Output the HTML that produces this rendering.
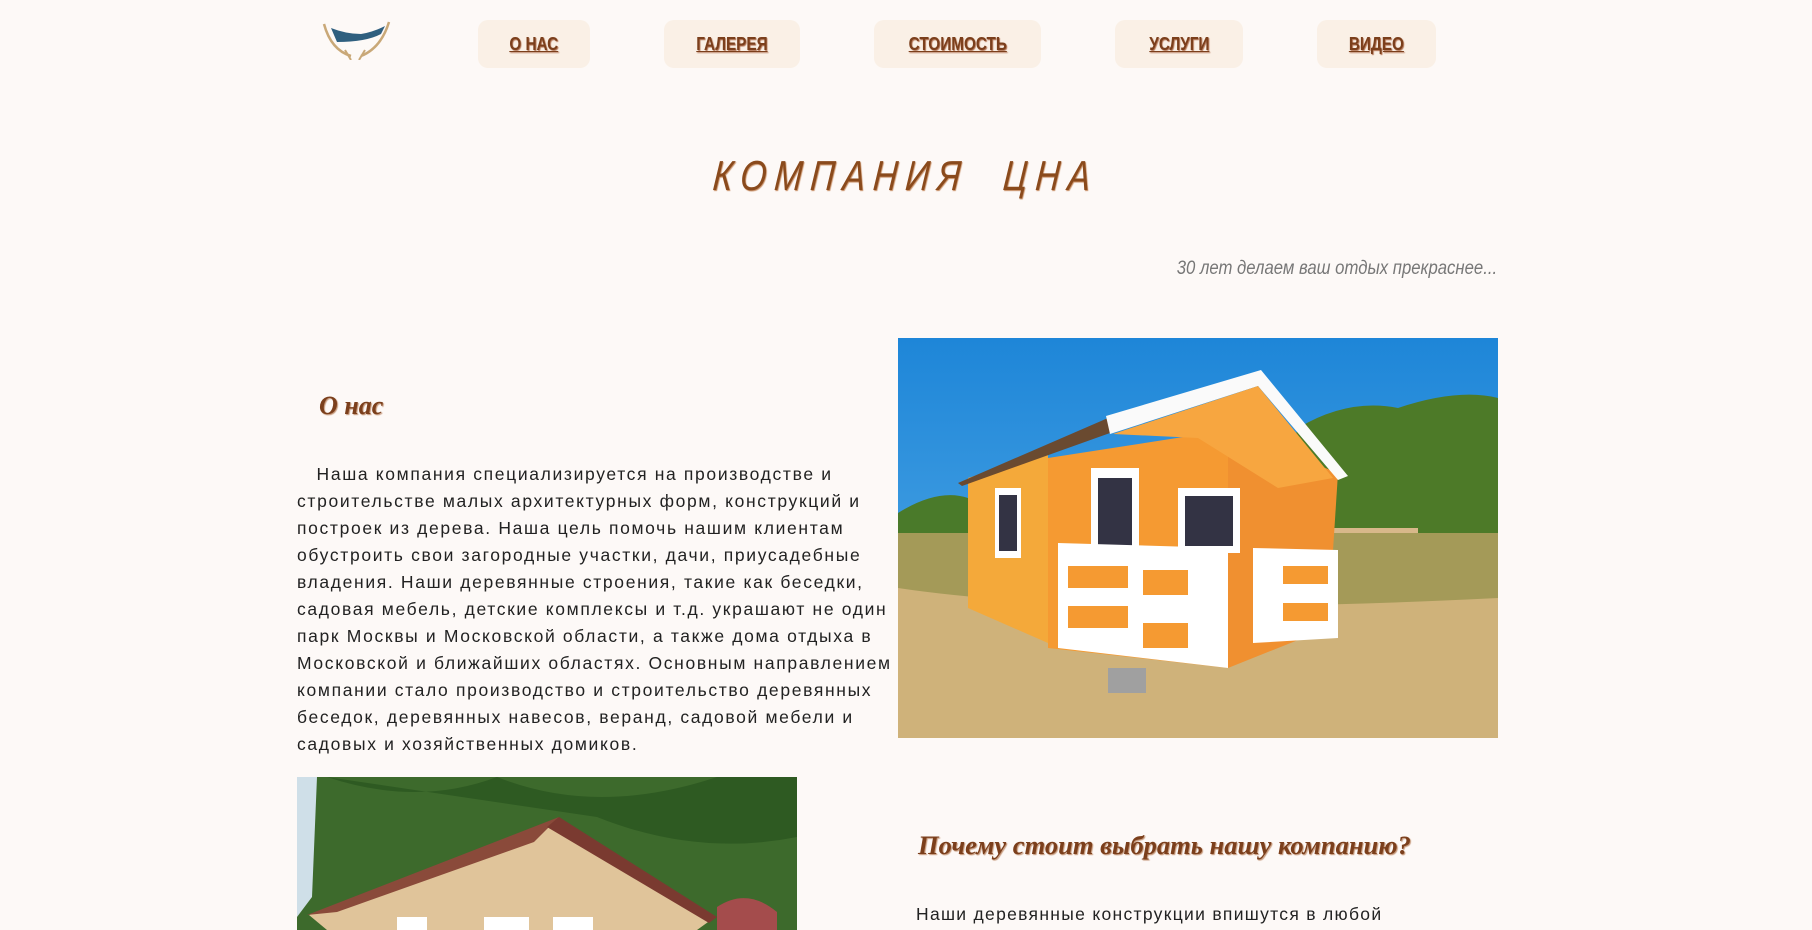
<!DOCTYPE html>
<html><head><meta charset="utf-8"><style>
*{margin:0;padding:0;box-sizing:border-box}
body{width:1812px;height:930px;overflow:hidden;background:#fdf9f7;font-family:"Liberation Sans",sans-serif;position:relative}
.btn{position:absolute;top:20px;height:48px;background:#faf0e6;border-radius:10px;display:flex;align-items:center;justify-content:center;color:#7b3f1c;font-weight:bold;font-size:18px;text-decoration:underline;text-shadow:1px 1px 1px #b07050}
.btn span{display:inline-block;transform:scaleX(.85)}
.title{position:absolute;left:0;width:1812px;top:150px;text-align:center;font-size:42px;font-style:italic;color:#8a4a1c;text-shadow:1px 1px 1px #c48a60}
.title span{display:inline-block;transform:scaleX(.8) skewX(-6deg);letter-spacing:10px}
.sub{position:absolute;right:315px;top:258px;font-size:19px;font-style:italic;color:#777;transform:scaleX(.88);transform-origin:right}
.h2{position:absolute;font-family:"Liberation Serif",serif;font-style:italic;font-weight:bold;color:#7b3f1c;text-shadow:1px 1px 1px #c09070}
.p{position:absolute;left:297px;top:461px;font-size:17.5px;line-height:27px;color:#222;letter-spacing:1.65px;white-space:nowrap}
</style></head><body>
<svg style="position:absolute;left:321px;top:20px" width="70" height="40" viewBox="0 0 70 40">
<path d="M3 4 Q10 30 30 36 M68 2 Q60 28 40 36" stroke="#c9a878" stroke-width="2.5" fill="none"/>
<path d="M24 30 L30 40 M44 30 L38 40" stroke="#c9a878" stroke-width="2"/>
<path d="M10 8 Q25 14 40 14 Q52 12 64 6 L60 14 Q45 22 16 22 Z" fill="#2f5f7f"/>
</svg>
<div class="btn" style="left:478px;width:112px"><span>О НАС</span></div>
<div class="btn" style="left:664px;width:136px"><span>ГАЛЕРЕЯ</span></div>
<div class="btn" style="left:874px;width:167px"><span>СТОИМОСТЬ</span></div>
<div class="btn" style="left:1115px;width:128px"><span>УСЛУГИ</span></div>
<div class="btn" style="left:1317px;width:119px"><span>ВИДЕО</span></div>
<div class="title" style="top:152px"><span>КОМПАНИЯ&nbsp; ЦНА</span></div>
<div class="sub">30 лет делаем ваш отдых прекраснее...</div>
<div class="h2" style="left:319px;top:391px;font-size:26px">О нас</div>
<div class="p">&nbsp;&nbsp;&nbsp;Наша компания специализируется на производстве и<br>строительстве малых архитектурных форм, конструкций и<br>построек из дерева. Наша цель помочь нашим клиентам<br>обустроить свои загородные участки, дачи, приусадебные<br>владения. Наши деревянные строения, такие как беседки,<br>садовая мебель, детские комплексы и т.д. украшают не один<br>парк Москвы и Московской области, а также дома отдыха в<br>Московской и ближайших областях. Основным направлением<br>компании стало производство и строительство деревянных<br>беседок, деревянных навесов, веранд, садовой мебели и<br>садовых и хозяйственных домиков.</div>
<svg style="position:absolute;left:898px;top:338px" width="600" height="400" viewBox="0 0 600 400">
<defs><linearGradient id="sk" x1="0" y1="0" x2="0" y2="1"><stop offset="0" stop-color="#1e86d8"/><stop offset="1" stop-color="#5aaee8"/></linearGradient></defs>
<rect width="600" height="400" fill="url(#sk)"/>
<path d="M0 175 Q40 150 70 160 L75 200 L0 200Z" fill="#4a7a2a"/>
<path d="M400 90 Q450 60 500 70 Q560 50 600 60 L600 210 L360 210 Z" fill="#4d7a28"/>
<path d="M360 190 L520 190 L520 240 L360 240Z" fill="#d8b88a"/>
<rect y="195" width="600" height="205" fill="#a49a58"/>
<path d="M0 250 Q200 280 600 260 L600 400 L0 400Z" fill="#cfb27a"/>
<path d="M70 140 L150 115 L150 305 L70 270Z" fill="#f4a93a"/>
<path d="M150 120 L330 92 L330 330 L150 310Z" fill="#f59a32"/>
<path d="M330 92 L440 135 L430 290 L330 330Z" fill="#f09030"/>
<path d="M60 145 L210 80 L212 95 L64 148Z" fill="#6a4a30"/>
<path d="M208 78 L363 32 L450 138 L440 142 L360 48 L212 96Z" fill="#fafafa"/>
<path d="M215 96 L360 48 L435 140 L380 150 L300 100Z" fill="#f7a640"/>
<rect x="97" y="150" width="26" height="70" fill="#fff"/><rect x="101" y="157" width="18" height="56" fill="#334"/>
<rect x="193" y="130" width="48" height="110" fill="#fff"/><rect x="200" y="140" width="34" height="80" fill="#334"/>
<rect x="280" y="150" width="62" height="65" fill="#fff"/><rect x="287" y="158" width="48" height="50" fill="#334"/>
<path d="M160 205 L330 210 L330 330 L160 310Z" fill="#fff"/>
<rect x="170" y="228" width="60" height="22" fill="#f59a32"/><rect x="170" y="268" width="60" height="22" fill="#f59a32"/>
<rect x="245" y="232" width="45" height="25" fill="#f59a32"/><rect x="245" y="285" width="45" height="25" fill="#f59a32"/>
<path d="M355 210 L440 212 L440 300 L355 305Z" fill="#fff"/>
<rect x="385" y="228" width="45" height="18" fill="#f59a32"/><rect x="385" y="265" width="45" height="18" fill="#f59a32"/>
<rect x="210" y="330" width="38" height="25" fill="#a0a0a0"/>
</svg>
<svg style="position:absolute;left:297px;top:777px" width="500" height="153" viewBox="0 0 500 153">
<rect width="500" height="153" fill="#3d6a2c"/>
<path d="M0 0 L20 0 L15 120 L0 140Z" fill="#cfdfe8"/>
<path d="M30 0 Q120 30 200 0 Q300 40 420 0 L500 0 L500 60 Q400 80 300 40Z" fill="#2e5a22"/>
<path d="M12 138 L203 70 L250 50 L418 140 L400 153 L30 153Z" fill="#e0c49a"/>
<path d="M10 138 L203 63 L262 40 L237 65 L40 135Z" fill="#8a4a3a"/>
<path d="M262 40 L420 140 L412 146 L250 50Z" fill="#7a3a30"/>
<rect x="100" y="140" width="30" height="13" fill="#fff"/><rect x="187" y="140" width="45" height="13" fill="#fff"/><rect x="256" y="140" width="40" height="13" fill="#fff"/>
<path d="M420 130 Q450 110 480 135 L480 153 L420 153Z" fill="#a44c4c"/>
</svg>
<div class="h2" style="left:918px;top:831px;font-size:26px;transform:scaleX(1.02);transform-origin:left">Почему стоит выбрать нашу компанию?</div>
<div class="p" style="left:916px;top:901px;letter-spacing:1.3px">Наши деревянные конструкции впишутся в любой</div>
</body></html>
